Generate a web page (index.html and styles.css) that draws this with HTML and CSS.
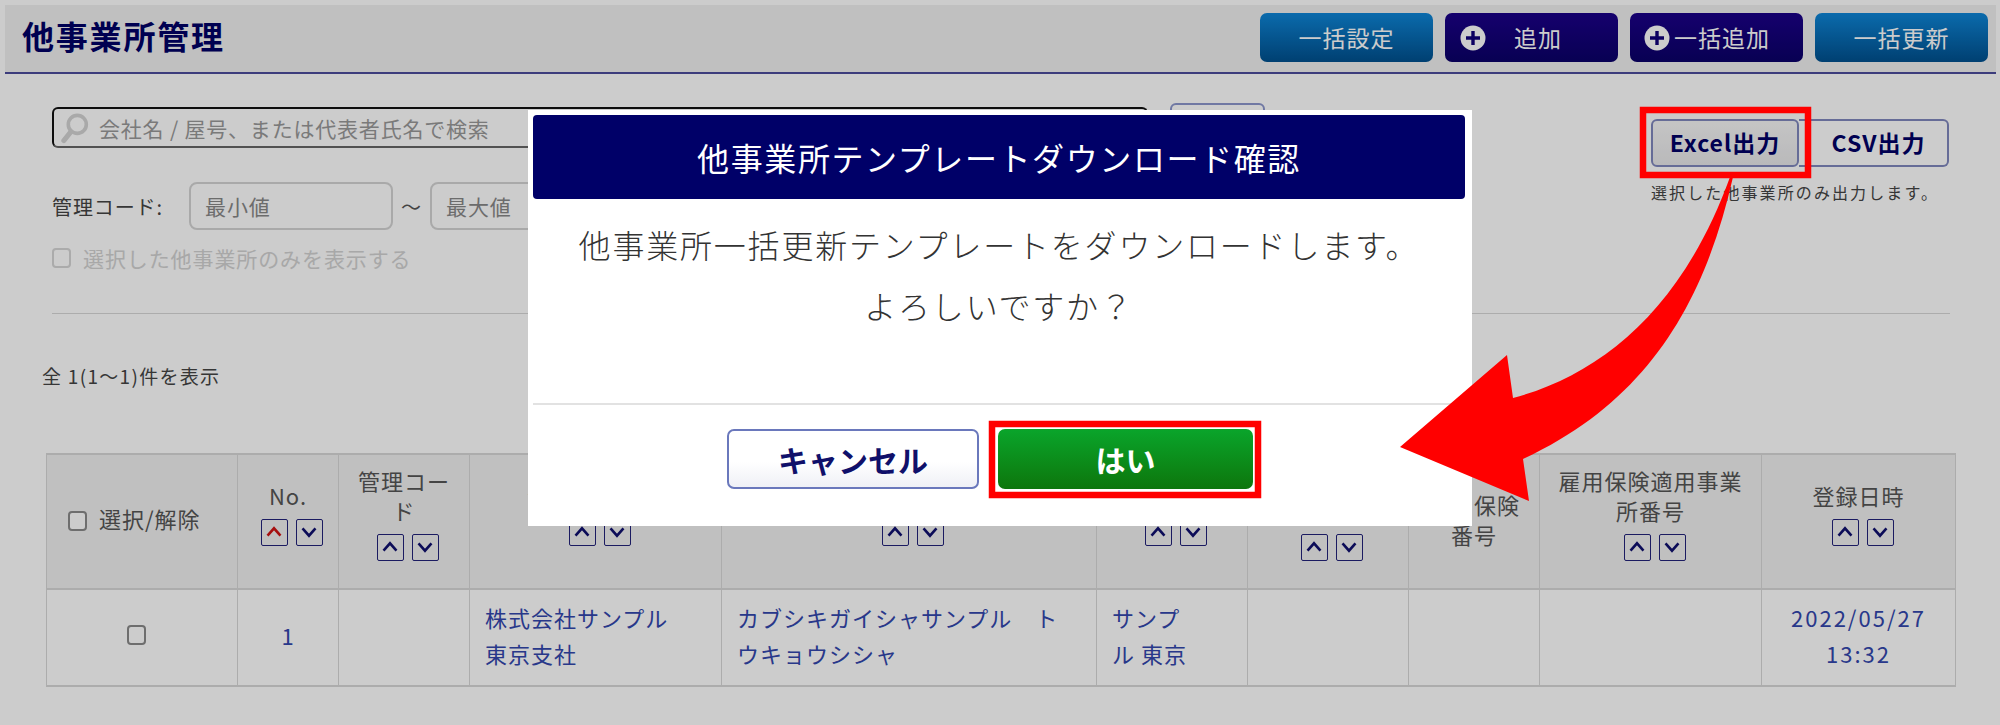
FILE: index.html
```html
<!DOCTYPE html>
<html lang="ja">
<head>
<meta charset="utf-8">
<title>他事業所管理</title>
<link rel="stylesheet" href="styles.css">
</head>
<body>
<div class="page">
  <header class="topbar">
    <h1 class="page-title">他事業所管理</h1>
    <div class="actions">
      <a class="act act-blue"><span>一括設定</span></a>
      <a class="act act-navy act-add">
        <svg class="plus" viewBox="0 0 26 26"><circle cx="13" cy="13" r="12.5" fill="#fff"/><path d="M13 6v14M6 13h14" stroke="#10007a" stroke-width="3.4"/></svg>
        <span>追加</span>
      </a>
      <a class="act act-navy act-bulk">
        <svg class="plus" viewBox="0 0 26 26"><circle cx="13" cy="13" r="12.5" fill="#fff"/><path d="M13 6v14M6 13h14" stroke="#10007a" stroke-width="3.4"/></svg>
        <span>一括追加</span>
      </a>
      <a class="act act-blue"><span>一括更新</span></a>
    </div>
  </header>

  <section class="filters">
    <div class="filter-left">
      <div class="search-row">
        <div class="search">
          <svg class="lens" viewBox="0 0 32 40"><circle cx="18" cy="16" r="10" fill="none" stroke="#d4d4d4" stroke-width="4"/><path d="M11 24 3 34" stroke="#d4d4d4" stroke-width="5.5" stroke-linecap="round"/></svg>
          <span>会社名 / 屋号、または代表者氏名で検索</span>
        </div>
        <a class="search-btn">検索</a>
      </div>
      <div class="code-row">
        <span class="code-label">管理コード:</span>
        <div class="range">最小値</div>
        <span class="tilde">～</span>
        <div class="range">最大値</div>
      </div>
      <label class="only-row"><input type="checkbox" class="chk chk-off"><span>選択した他事業所のみを表示する</span></label>
    </div>
    <div class="filter-right">
      <div class="export">
        <a class="exp exp-on">Excel出力</a>
        <a class="exp exp-csv">CSV出力</a>
      </div>
      <p class="export-note">選択した他事業所のみ出力します。</p>
    </div>
  </section>

  <hr class="rule">
  <p class="count">全 1(1～1)件を表示</p>

  <table class="grid">
    <colgroup>
      <col class="w1"><col class="w2"><col class="w3"><col class="w4"><col class="w5">
      <col class="w6"><col class="w7"><col class="w8"><col class="w9"><col class="w10">
    </colgroup>
    <thead>
      <tr>
        <th class="th-select"><input type="checkbox" class="chk"><span>選択/解除</span></th>
        <th>No.
          <div class="sort">
            <a class="sb"><svg viewBox="0 0 26 26"><path d="M6 17l7-8 7 8" class="up-on"/></svg></a>
            <a class="sb"><svg viewBox="0 0 26 26"><path d="M6 9l7 8 7-8"/></svg></a>
          </div>
        </th>
        <th>管理コー<br>ド
          <div class="sort">
            <a class="sb"><svg viewBox="0 0 26 26"><path d="M6 17l7-8 7 8"/></svg></a>
            <a class="sb"><svg viewBox="0 0 26 26"><path d="M6 9l7 8 7-8"/></svg></a>
          </div>
        </th>
        <th>会社名 / 屋号
          <div class="sort">
            <a class="sb"><svg viewBox="0 0 26 26"><path d="M6 17l7-8 7 8"/></svg></a>
            <a class="sb"><svg viewBox="0 0 26 26"><path d="M6 9l7 8 7-8"/></svg></a>
          </div>
        </th>
        <th>フリガナ
          <div class="sort">
            <a class="sb"><svg viewBox="0 0 26 26"><path d="M6 17l7-8 7 8"/></svg></a>
            <a class="sb"><svg viewBox="0 0 26 26"><path d="M6 9l7 8 7-8"/></svg></a>
          </div>
        </th>
        <th>略称
          <div class="sort">
            <a class="sb"><svg viewBox="0 0 26 26"><path d="M6 17l7-8 7 8"/></svg></a>
            <a class="sb"><svg viewBox="0 0 26 26"><path d="M6 9l7 8 7-8"/></svg></a>
          </div>
        </th>
        <th>代表者<br>氏名
          <div class="sort">
            <a class="sb"><svg viewBox="0 0 26 26"><path d="M6 17l7-8 7 8"/></svg></a>
            <a class="sb"><svg viewBox="0 0 26 26"><path d="M6 9l7 8 7-8"/></svg></a>
          </div>
        </th>
        <th class="th-plain">雇用保険<br>番号</th>
        <th>雇用保険適用事業<br>所番号
          <div class="sort">
            <a class="sb"><svg viewBox="0 0 26 26"><path d="M6 17l7-8 7 8"/></svg></a>
            <a class="sb"><svg viewBox="0 0 26 26"><path d="M6 9l7 8 7-8"/></svg></a>
          </div>
        </th>
        <th>登録日時
          <div class="sort">
            <a class="sb"><svg viewBox="0 0 26 26"><path d="M6 17l7-8 7 8"/></svg></a>
            <a class="sb"><svg viewBox="0 0 26 26"><path d="M6 9l7 8 7-8"/></svg></a>
          </div>
        </th>
      </tr>
    </thead>
    <tbody>
      <tr>
        <td class="mid mid-chk"><input type="checkbox" class="chk chk-row"></td>
        <td class="mid link">1</td>
        <td></td>
        <td class="link">株式会社サンプル<br>東京支社</td>
        <td class="link">カブシキガイシャサンプル　ト<br>ウキョウシシャ</td>
        <td class="link">サンプ<br>ル 東京</td>
        <td></td>
        <td></td>
        <td></td>
        <td class="mid link date">2022/05/27<br>13:32</td>
      </tr>
    </tbody>
  </table>
</div>

<div class="scrim"></div>

<div class="modal">
  <div class="modal-head">他事業所テンプレートダウンロード確認</div>
  <div class="modal-body">
    <p>他事業所一括更新テンプレートをダウンロードします。</p>
    <p>よろしいですか？</p>
  </div>
  <div class="modal-foot">
    <a class="mbtn mbtn-cancel">キャンセル</a>
    <a class="mbtn mbtn-yes">はい</a>
  </div>
</div>

<svg class="callouts" viewBox="0 0 2000 725">
  <rect x="1643" y="110" width="165" height="65" fill="none" stroke="#f00" stroke-width="6.5"/>
  <rect x="992" y="424" width="266" height="71" fill="none" stroke="#f00" stroke-width="6.5"/>
  <path fill="#f00" d="M1733 177 C1705 300 1650 400 1523 459 L1529 501 L1400 447 L1507 355 L1513 398 C1600 375 1682 310 1730 177 Z"/>
</svg>
</body>
</html>
```
FILE: styles.css
```css
* { box-sizing: border-box; }
html, body { margin: 0; height: 725px; overflow: hidden; }
body {
  position: relative;
  background: #fff;
  color: #444;
  font-family: "Noto Sans CJK JP", "Noto Sans", sans-serif;
  font-weight: 400;
}
a { display: block; }
p { margin: 0; }

.page { width: 2000px; height: 725px; }

/* top bar */
.topbar {
  margin: 5px 4px 0 5px;
  height: 69px;
  padding: 8px 8px 0 17px;
  display: flex;
  justify-content: space-between;
  align-items: flex-start;
  background: #f0f0f0;
  border-bottom: 2px solid #4b4b9c;
}
.page-title {
  margin: 0;
  font-size: 32px;
  line-height: 44px;
  letter-spacing: 1.8px;
  font-weight: 700;
  color: #000066;
}
.actions { display: flex; gap: 12px; }
.act {
  width: 173px;
  height: 49px;
  border-radius: 7px;
  display: flex;
  align-items: center;
  justify-content: center;
  color: #fff;
  font-size: 23px;
  letter-spacing: 1px;
  line-height: 1;
}
.act-blue { background: linear-gradient(#0e86d8, #00508e); }
.act-navy { background: linear-gradient(#1b0089, #0a0068); }
.act-add { justify-content: flex-start; padding-left: 15px; gap: 28px; }
.act-bulk { justify-content: flex-start; padding-left: 14px; gap: 4px; }
.plus { width: 26px; height: 26px; flex: none; }

/* filters */
.filters {
  display: flex;
  justify-content: space-between;
  padding: 29px 51px 0 52px;
}
.search-row { display: flex; align-items: flex-start; gap: 22px; }
.search {
  margin-top: 4px;
  width: 1096px;
  height: 41px;
  border: 2px solid #111;
  border-bottom-color: #666;
  border-radius: 6px;
  display: flex;
  align-items: center;
  padding-left: 7px;
  gap: 9px;
  font-size: 21px;
  letter-spacing: .8px;
  color: #999;
}
.lens { width: 29px; height: 36px; flex: none; }
.search-btn {
  width: 95px;
  height: 47px;
  border: 2px solid #8c97cc;
  border-radius: 6px;
  text-align: center;
  line-height: 43px;
  color: #000066;
  font-size: 20px;
}
.code-row {
  margin-top: 32px;
  display: flex;
  align-items: center;
  font-size: 20px;
  letter-spacing: .9px;
}
.code-label { width: 137px; color: #444; }
.range {
  width: 204px;
  height: 48px;
  border: 2px solid #d4d4d4;
  border-radius: 8px;
  padding-left: 14px;
  display: flex;
  align-items: center;
  font-size: 21px;
  color: #888;
}
.tilde { width: 37px; text-align: center; font-size: 20px; color: #555; }
.only-row {
  margin-top: 15px;
  height: 25px;
  display: flex;
  align-items: center;
  gap: 12px;
  font-size: 21px;
  letter-spacing: .9px;
  color: #d2d2d2;
}
.chk {
  appearance: none;
  margin: 0;
  flex: none;
  width: 19px;
  height: 20px;
  background: #fff;
  border: 2px solid #8a8a8a;
  border-radius: 4px;
}
.chk-off { border-color: #d6d6d6; }
.chk-row { display: block; margin: 0 auto; }

.filter-right { width: 298px; margin-top: 16px; }
.export { display: flex; }
.exp {
  width: 150px;
  height: 48px;
  border: 2px solid #8088bd;
  border-left-width: 0;
  border-radius: 0 6px 6px 0;
  text-align: center;
  line-height: 43px;
  font-size: 23px;
  letter-spacing: 1px;
  font-weight: 700;
  color: #000066;
}
.exp-csv { padding-left: 11px; }
.exp-on {
  width: 148px;
  border-left-width: 2px;
  border-radius: 6px;
  background: linear-gradient(#f6f6f6, #e8e8ea);
}
.export-note {
  margin-top: 13px;
  font-size: 16px;
  letter-spacing: 2.1px;
  line-height: 24px;
  color: #444;
  white-space: nowrap;
}

.rule {
  margin: 43px 50px 0 52px;
  border: 0;
  height: 1px;
  background: #d8d8d8;
}
.count {
  margin: 50px 0 0 42px;
  line-height: 24px;
  font-size: 19px;
  letter-spacing: 1.3px;
  color: #444;
}

/* table */
.grid {
  margin: 65px 0 0 46px;
  width: 1909px;
  table-layout: fixed;
  border-collapse: collapse;
  font-size: 22px;
  letter-spacing: 1px;
  line-height: 30px;
}
.w1 { width: 191px; } .w2 { width: 101px; } .w3 { width: 131px; }
.w4 { width: 252px; } .w5 { width: 375px; } .w6 { width: 151px; }
.w7 { width: 161px; } .w8 { width: 131px; } .w9 { width: 222px; }
.w10 { width: 194px; }
.grid th, .grid td { border: 1px solid #d8d8d8; }
.grid th {
  height: 135px;
  padding: 0 8px 17px;
  background: #f0f0f0;
  font-weight: 400;
  color: #555;
  vertical-align: middle;
  border-top-width: 2px;
  border-bottom-width: 2px;
}
.th-select { padding: 0 0 8px 21px !important; text-align: left; }
.th-select .chk { vertical-align: -3px; margin-right: 12px; }
.th-plain { padding-bottom: 6px !important; }
.grid td {
  height: 97px;
  padding: 0 15px 6px;
  line-height: 36px;
  border-bottom-width: 2px;
}
.mid { text-align: center; }
.mid-chk { padding-right: 27px !important; }
.link { color: #3246ad; }
.date { letter-spacing: 2px; }

.sort {
  display: flex;
  justify-content: center;
  gap: 8px;
  margin-top: 9px;
  padding-left: 8px;
}
.sb {
  width: 27px;
  height: 27px;
  border: 1.5px solid #22227a;
  border-radius: 2px;
}
.sb svg { display: block; width: 24px; height: 24px; }
.sb path { fill: none; stroke: #10106e; stroke-width: 2.8; }
.sb path.up-on { stroke: #d01414; }

/* dialog layer */
.scrim {
  position: absolute;
  inset: 0;
  background: rgba(0, 0, 0, .2);
}
.modal {
  position: absolute;
  left: 528px;
  top: 110px;
  width: 944px;
  height: 416px;
  padding: 5px 7px 5px 5px;
  background: #fff;
  display: flex;
  flex-direction: column;
}
.modal-head {
  height: 84px;
  border-radius: 4px;
  background: #000068;
  color: #fff;
  display: flex;
  align-items: center;
  justify-content: center;
  font-size: 32px;
  letter-spacing: 1.6px;
}
.modal-body {
  height: 206px;
  padding-top: 15px;
  border-bottom: 2px solid #e2e2e2;
  text-align: center;
  font-size: 32px;
  letter-spacing: 1.8px;
  line-height: 61px;
  font-weight: 300;
  color: #333;
}
.modal-foot {
  padding: 24px 18px 0 0;
  display: flex;
  justify-content: center;
  gap: 19px;
}
.mbtn {
  height: 60px;
  border-radius: 7px;
  display: flex;
  align-items: center;
  justify-content: center;
  font-size: 30px;
  font-weight: 700;
}
.mbtn-cancel {
  width: 252px;
  border: 2px solid #6a78bc;
  background: linear-gradient(#fff 55%, #eff0f6);
  color: #10106a;
}
.mbtn-yes {
  width: 255px;
  background: linear-gradient(#0aa52b, #0d760c);
  color: #fff;
}

.callouts {
  position: absolute;
  left: 0;
  top: 0;
  width: 2000px;
  height: 725px;
  pointer-events: none;
}
```
